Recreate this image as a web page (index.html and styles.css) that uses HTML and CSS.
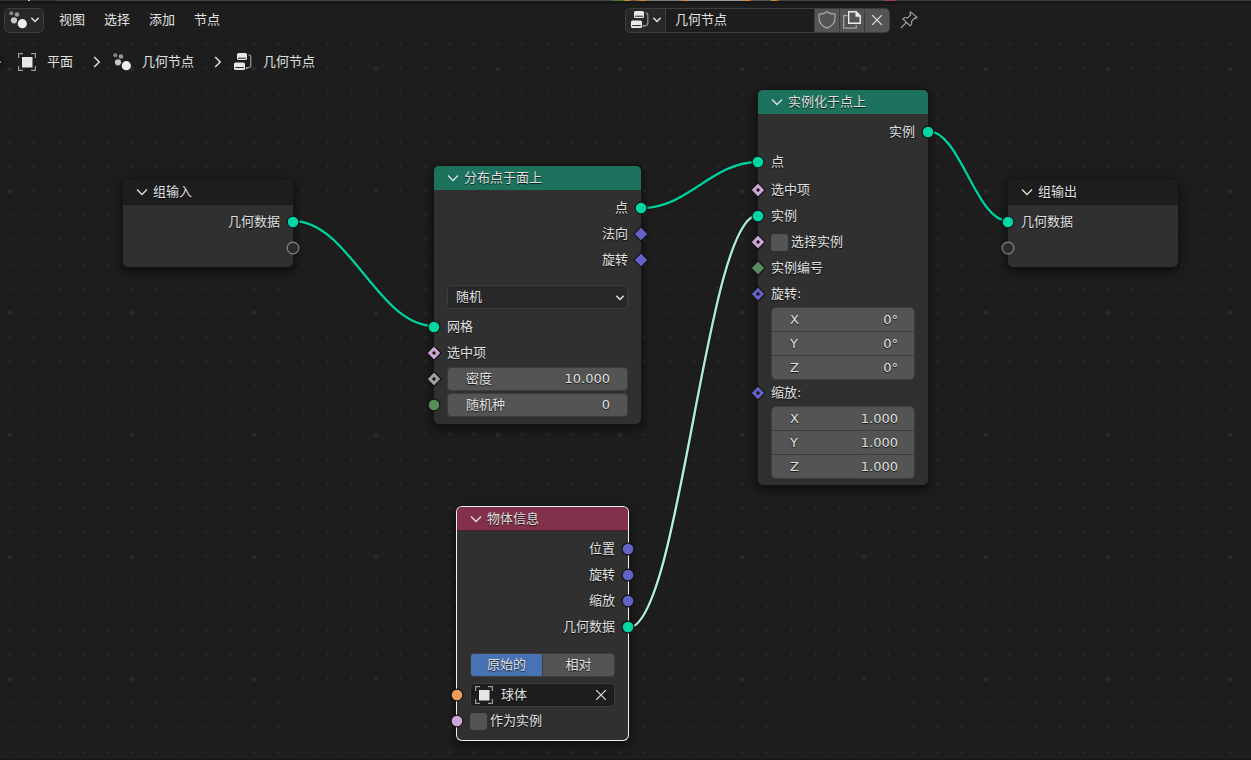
FILE: index.html
```html
<!DOCTYPE html>
<html lang="zh-CN">
<head>
<meta charset="utf-8">
<title>几何节点</title>
<link rel="stylesheet" href="styles.css">
</head>
<body>
<svg class="defs" aria-hidden="true">
  <symbol id="chev" viewBox="0 0 12 8"><path d="M1 1.5 6 6.5 11 1.5" fill="none" stroke="currentColor" stroke-width="1.3"/></symbol>
  <symbol id="chev-small" viewBox="0 0 8 6"><path d="M.4 .8 4 4.600 7.600 .8" fill="none" stroke="currentColor" stroke-width="1.4"/></symbol>
  <symbol id="chev-right" viewBox="0 0 8 12"><path d="M1.2 1 6.2 6 1.2 11" fill="none" stroke="currentColor" stroke-width="1.5"/></symbol>
  <symbol id="cross" viewBox="0 0 12 12"><path d="M1.2 1.2 10.8 10.8M10.8 1.2 1.2 10.8" fill="none" stroke="currentColor" stroke-width="1.2"/></symbol>
  <symbol id="object" viewBox="0 0 18 18"><rect x="4" y="4" width="10.500" height="10.500" fill="#e6e6e6"/><path d="M.6 5V.6H5M13 .6h4.400V5M17.400 13v4.400H13M5 17.400H.6V13" fill="none" stroke="#9a9a9a" stroke-width="1.200"/></symbol>
  <symbol id="geo" viewBox="0 0 18 18"><circle cx="2.300" cy="2.300" r="2" fill="#858585"/><circle cx="8" cy="3.500" r="2.300" fill="#979797"/><circle cx="5" cy="9.300" r="3.100" fill="#c8c8c8"/><circle cx="13.300" cy="12.700" r="4.600" fill="#eee"/></symbol>
  <symbol id="tree" viewBox="0 0 18 18"><rect x="3" y="0" width="10" height="7" rx="1.500" fill="#e8e8e8"/><path d="M4 5.200h8" stroke="#222" stroke-width="1"/><rect x="0" y="9.500" width="11" height="7.500" rx="1.500" fill="#e8e8e8"/><path d="M1.200 14.600h8.600" stroke="#222" stroke-width="1"/><path d="M14.500 1.800c1.500 0 2.300.8 2.300 2.200v8c0 1.600-1 2.600-2.600 2.600h-1" fill="none" stroke="#8d8d8d" stroke-width="1.300"/><circle cx="12.600" cy="15" r="1" fill="#aaa"/></symbol>
  <symbol id="shield" viewBox="0 0 18 18"><path d="M9 .8c2.300 1.700 4.900 2.400 8 2.400v4.300c0 4.500-3.200 7.600-8 9.600-4.800-2-8-5.100-8-9.600V3.200c3.100 0 5.700-.7 8-2.400z" fill="none" stroke="#a9a9a9" stroke-width="1.200"/></symbol>
  <symbol id="copy" viewBox="0 0 18 18"><path d="M4.500 4.700H.7v12.500h12.500V14" fill="none" stroke="#a2a2a2" stroke-width="1.300"/><path d="M5.700.8h7.500l4 4v7.500H5.700z" fill="none" stroke="#ececec" stroke-width="1.400"/><path d="M12.500.8v5h5z" fill="#ececec"/></symbol>
  <symbol id="pin" viewBox="0 0 18 18"><path d="M10.500.9 17 6.200l-1.500 1.300-1-.5-3 3.500.2 2.800-1.700 1.500L2.900 8l1.800-1.500 2.900.3 3.200-3.200-.9-1.300zM6.300 11.500.8 17.200" fill="none" stroke="#9b9b9b" stroke-width="1.200"/></symbol>
  <symbol id="circle" viewBox="0 0 14 14"><circle cx="7" cy="7" r="5.900" fill="currentColor" stroke="#151515" stroke-width="1.200"/></symbol>
  <symbol id="ring" viewBox="0 0 14 14"><circle cx="7" cy="7" r="5.800" fill="#2b2b2b" stroke="#858585" stroke-width="1.200"/></symbol>
  <symbol id="diamond" viewBox="0 0 14 14" overflow="visible"><path d="M7-.1 14.100 7 7 14.100-.1 7z" fill="currentColor" stroke="#151515" stroke-width="1.200"/></symbol>
  <symbol id="diamond-dot" viewBox="0 0 14 14" overflow="visible"><path d="M7-.1 14.100 7 7 14.100-.1 7z" fill="currentColor" stroke="#151515" stroke-width="1.200"/><circle cx="7" cy="7" r="1.700" fill="#151515"/></symbol>
</svg>

<div class="editor">
  <div class="edge"></div>
  <header class="toolbar">
    <button class="editor-type" aria-label="编辑器类型"><svg class="i18"><use href="#geo"/></svg><svg class="i8"><use href="#chev-small"/></svg></button>
    <nav class="menus">
      <button class="menu">视图</button>
      <button class="menu">选择</button>
      <button class="menu">添加</button>
      <button class="menu">节点</button>
    </nav>
    <div class="datablock">
      <button class="browse" aria-label="浏览节点树"><svg class="i18"><use href="#tree"/></svg><svg class="i8"><use href="#chev-small"/></svg></button>
      <input class="tree-name" aria-label="名称" value="几何节点">
      <button class="tool" aria-label="伪用户"><svg class="i18"><use href="#shield"/></svg></button>
      <button class="tool" aria-label="新建"><svg class="i18"><use href="#copy"/></svg></button>
      <button class="tool" aria-label="断开"><svg class="i12"><use href="#cross"/></svg></button>
    </div>
    <button class="pin" aria-label="固定"><svg class="i18"><use href="#pin"/></svg></button>
    <div class="rest"></div>
  </header>

  <main class="canvas">
    <svg class="backdrop" aria-hidden="true">
      <defs>
        <pattern id="grid" x="8" y="29" width="122" height="122" patternUnits="userSpaceOnUse">
          <g fill="#252525">
            <path d="M25 0h3v3h-3zM50 0h3v3h-3zM74 0h3v3h-3zM98 0h3v3h-3z"/>
            <path d="M1 25h3v3h-3zM25 25h3v3h-3zM50 25h3v3h-3zM74 25h3v3h-3zM98 25h3v3h-3z"/>
            <path d="M1 49h3v3h-3zM25 49h3v3h-3zM50 49h3v3h-3zM74 49h3v3h-3zM98 49h3v3h-3z"/>
            <path d="M1 74h3v3h-3zM25 74h3v3h-3zM50 74h3v3h-3zM74 74h3v3h-3zM98 74h3v3h-3z"/>
            <path d="M1 98h3v3h-3zM25 98h3v3h-3zM50 98h3v3h-3zM74 98h3v3h-3zM98 98h3v3h-3z"/>
          </g>
          <path d="M0 0h4v4h-4z" fill="#2a2a2a"/>
        </pattern>
        <linearGradient id="fade" gradientUnits="userSpaceOnUse" x1="628" y1="590" x2="758" y2="177">
          <stop offset="0" stop-color="#b4f1dc"/><stop offset="1" stop-color="#a6ebd3"/>
        </linearGradient>
      </defs>
      <rect width="100%" height="100%" fill="url(#grid)"/>
      <g fill="none" stroke="#141414" stroke-width="4">
        <path d="M293 183C349 183 378 288 434 288"/>
        <path d="M642 170C688 170 712 124 758 124"/>
        <path d="M628 590C680 590 706 177 758 177"/>
        <path d="M928 93C960 93 976 183 1008 183"/>
      </g>
      <g fill="none" stroke="#00cf9d" stroke-width="2.400">
        <path d="M293 183C349 183 378 288 434 288"/>
        <path d="M642 170C688 170 712 124 758 124"/>
        <path d="M628 590C680 590 706 177 758 177" stroke="url(#fade)"/>
        <path d="M928 93C960 93 976 183 1008 183"/>
      </g>
    </svg>

    <nav class="crumbs">
      <span class="crumb"><svg class="i18"><use href="#object"/></svg>平面</span>
      <svg class="sep"><use href="#chev-right"/></svg>
      <span class="crumb"><svg class="i18"><use href="#geo"/></svg>几何节点</span>
      <svg class="sep"><use href="#chev-right"/></svg>
      <span class="crumb"><svg class="i18"><use href="#tree"/></svg>几何节点</span>
    </nav>
    <div class="region-tab"></div>

    <section class="node group-in">
      <h2 class="title dark"><svg class="fold"><use href="#chev"/></svg>组输入</h2>
      <div class="body tight">
        <div class="row out">几何数据<svg class="socket geometry"><use href="#circle"/></svg></div>
        <div class="row out"><svg class="socket"><use href="#ring"/></svg></div>
      </div>
    </section>

    <section class="node distribute">
      <h2 class="title green"><svg class="fold"><use href="#chev"/></svg>分布点于面上</h2>
      <div class="body">
        <div class="row out">点<svg class="socket geometry"><use href="#circle"/></svg></div>
        <div class="row out">法向<svg class="socket vector"><use href="#diamond"/></svg></div>
        <div class="row out">旋转<svg class="socket vector"><use href="#diamond"/></svg></div>
        <div class="picker">
          <select class="select" aria-label="分布方式"><option>随机</option></select>
          <svg class="caret"><use href="#chev-small"/></svg>
        </div>
        <div class="row">网格<svg class="socket geometry"><use href="#circle"/></svg></div>
        <div class="row">选中项<svg class="socket bool"><use href="#diamond-dot"/></svg></div>
        <div class="row"><label class="field">密度<input class="value" value="10.000"></label><svg class="socket float"><use href="#diamond-dot"/></svg></div>
        <div class="row"><label class="field">随机种<input class="value" value="0"></label><svg class="socket int"><use href="#circle"/></svg></div>
      </div>
    </section>

    <section class="node instance">
      <h2 class="title green"><svg class="fold"><use href="#chev"/></svg>实例化于点上</h2>
      <div class="body">
        <div class="row out">实例<svg class="socket geometry"><use href="#circle"/></svg></div>
        <div class="row first-in">点<svg class="socket geometry"><use href="#circle"/></svg></div>
        <div class="row">选中项<svg class="socket bool"><use href="#diamond-dot"/></svg></div>
        <div class="row">实例<svg class="socket geometry"><use href="#circle"/></svg></div>
        <div class="row"><label class="check"><input type="checkbox" class="box">选择实例</label><svg class="socket bool"><use href="#diamond-dot"/></svg></div>
        <div class="row">实例编号<svg class="socket int"><use href="#diamond"/></svg></div>
        <div class="row">旋转:<svg class="socket vector"><use href="#diamond-dot"/></svg></div>
        <div class="triple">
          <label class="part">X<input class="value" value="0°"></label>
          <label class="part">Y<input class="value" value="0°"></label>
          <label class="part">Z<input class="value" value="0°"></label>
        </div>
        <div class="row">缩放:<svg class="socket vector"><use href="#diamond-dot"/></svg></div>
        <div class="triple">
          <label class="part">X<input class="value" value="1.000"></label>
          <label class="part">Y<input class="value" value="1.000"></label>
          <label class="part">Z<input class="value" value="1.000"></label>
        </div>
      </div>
    </section>

    <section class="node object-info">
      <h2 class="title red"><svg class="fold"><use href="#chev"/></svg>物体信息</h2>
      <div class="body">
        <div class="row out">位置<svg class="socket vector"><use href="#circle"/></svg></div>
        <div class="row out">旋转<svg class="socket vector"><use href="#circle"/></svg></div>
        <div class="row out">缩放<svg class="socket vector"><use href="#circle"/></svg></div>
        <div class="row out">几何数据<svg class="socket geometry"><use href="#circle"/></svg></div>
        <div class="toggle">
          <button class="choice on">原始的</button>
          <button class="choice">相对</button>
        </div>
        <div class="row">
          <div class="object-field"><svg class="i18"><use href="#object"/></svg><input class="object-name" aria-label="物体" value="球体"><button class="clear" aria-label="清除"><svg class="i12"><use href="#cross"/></svg></button></div>
          <svg class="socket object"><use href="#circle"/></svg>
        </div>
        <div class="row"><label class="check"><input type="checkbox" class="box">作为实例</label><svg class="socket bool"><use href="#circle"/></svg></div>
      </div>
    </section>

    <section class="node group-out">
      <h2 class="title dark"><svg class="fold"><use href="#chev"/></svg>组输出</h2>
      <div class="body tight">
        <div class="row">几何数据<svg class="socket geometry"><use href="#circle"/></svg></div>
        <div class="row"><svg class="socket"><use href="#ring"/></svg></div>
      </div>
    </section>
  </main>
</div>
</body>
</html>
```
FILE: styles.css
```css
* { box-sizing: border-box; }
body {
  margin: 0;
  background: #1d1d1d;
  color: #e0e0e0;
  font: 13px/20px "DejaVu Sans", "Noto Sans CJK SC", sans-serif;
}
button, input, select {
  margin: 0;
  padding: 0;
  border: 0;
  background: none;
  color: inherit;
  font: inherit;
}
input { min-width: 0; }
svg { display: block; flex: none; }
.defs { position: absolute; width: 0; height: 0; }
.i18 { width: 18px; height: 18px; }
.i12 { width: 12px; height: 12px; }
.i8 { width: 8px; height: 6px; }

.editor {
  display: flex;
  flex-direction: column;
  min-height: 100vh;
  border-bottom: 1px solid #1b1317;
}
.edge {
  height: 4px;
  border-bottom: 3px solid #171717;
  background: linear-gradient(90deg, #333 0 28px, #ccc 28px 30px, #333 30px 56px, #444 56px 610px, #4c7a2c 616px 622px, #e08a30 627px 629px, #555 632px, #e08a30 642px 644px, #777 648px 680px, #e08a30 682px 684px, #999 690px 740px, #e08a30 746px 749px, #555 752px 770px, #e08a30 772px 775px, #444 780px 884px, #a04050 886px 894px, #3a3a3a 898px);
}
.toolbar {
  display: flex;
  align-items: center;
  height: 34px;
  padding: 0 0 2px 4px;
}
.editor-type, .browse {
  display: flex;
  align-items: center;
  justify-content: center;
  gap: 4px;
  width: 40px;
  height: 25px;
  background: #282828;
}
.editor-type { border: 1px solid #3d3d3d; border-radius: 5px; }
.menus { display: flex; flex: 17 1 0; gap: 19px; margin-left: 15px; }
.menu { white-space: nowrap; }
.datablock {
  display: flex;
  gap: 1px;
  width: 265px;
  height: 25px;
  border: 1px solid #3d3d3d;
  border-radius: 5px;
  background: #3d3d3d;
  overflow: hidden;
}
.browse { width: 39px; height: auto; }
.tree-name { flex: 1; padding-left: 9px; background: #1d1d1d; }
.tool { display: flex; align-items: center; justify-content: center; width: 24px; background: #545454; }
.pin { margin-left: 10px; }
.rest { flex: 10 1 0; }

.canvas { position: relative; flex: 1; overflow: hidden; }
.backdrop { position: absolute; inset: 0; width: 100%; height: 100%; }
.crumbs { position: relative; display: flex; align-items: center; gap: 20px; padding: 14px 18px; }
.crumb { display: flex; align-items: center; gap: 11px; }
.sep { width: 8px; height: 12px; margin-right: -8px; }
.region-tab {
  position: absolute;
  left: 0;
  top: 16px;
  width: 4px;
  height: 16px;
  border-radius: 0 4px 4px 0;
  background: linear-gradient(#888, #888) 0 7px / 1px 2px no-repeat #181818;
}

.node {
  position: absolute;
  border-radius: 5px;
  background: #303030;
  box-shadow: 0 0 0 1px #151515, 0 3px 9px 2px rgba(0, 0, 0, .5);
  text-shadow: 0 1px 1px rgba(0, 0, 0, .8);
}
.group-in { left: 123px; top: 141px; width: 170px; }
.distribute { left: 434px; top: 128px; width: 207px; }
.instance { left: 758px; top: 52px; width: 170px; }
.object-info { left: 457px; top: 469px; width: 171px; box-shadow: 0 0 0 1px #f0f0f0, 0 3px 9px 2px rgba(0, 0, 0, .5); }
.group-out { left: 1008px; top: 141px; width: 170px; }
.title {
  display: flex;
  align-items: center;
  gap: 5px;
  height: 24px;
  margin: 0;
  padding-left: 13px;
  border-radius: 5px 5px 0 0;
  font-size: 13px;
  font-weight: 400;
}
.fold { width: 12px; height: 8px; }
.dark { height: 26px; background: #1d1d1d; border-bottom: 1px solid #181818; }
.green { background: #1d725e; }
.red { background: #83314a; border-bottom: 1px solid #4a2030; }
.body { padding: 5px 13px 6px; }
.tight { padding-top: 4px; }
.row { position: relative; display: flex; align-items: center; height: 26px; }
.out { justify-content: flex-end; }
.first-in { margin: 4px 0 2px; }
.socket { position: absolute; left: -20px; top: 6px; width: 14px; height: 14px; overflow: visible; }
.out .socket { left: auto; right: -20px; }
.geometry { color: #00d6a3; }
.vector { color: #6363c7; }
.bool { color: #cca6d6; }
.float { color: #a1a1a1; }
.int { color: #598c5c; }
.object { color: #ed9e5c; }

.picker { position: relative; margin: 12px 0 5px; }
.select {
  display: block;
  width: 100%;
  height: 24px;
  padding-left: 8px;
  border: 1px solid #3d3d3d;
  border-radius: 4px;
  background: #282828;
  appearance: none;
  text-shadow: inherit;
}
.caret { position: absolute; right: 4px; top: 10px; width: 8px; height: 6px; }
.field {
  display: flex;
  align-items: center;
  flex: 1;
  height: 24px;
  padding: 0 17px 0 18px;
  border: 1px solid #3d3d3d;
  border-radius: 4px;
  background: #545454;
  white-space: nowrap;
}
.value { flex: 1; width: 0; text-align: right; text-shadow: inherit; }
.triple {
  display: grid;
  gap: 1px;
  border: 1px solid #3d3d3d;
  border-radius: 5px;
  background: #3d3d3d;
  overflow: hidden;
}
.part { display: flex; align-items: center; height: 23px; padding: 0 16px 0 18px; background: #545454; }
.check { display: flex; align-items: center; gap: 3px; }
.box { width: 17px; height: 17px; border-radius: 3px; background: #545454; appearance: none; }
.box:checked { background: #4772b3; }

.toggle {
  display: flex;
  gap: 1px;
  height: 24px;
  margin: 13px 0 5px;
  border: 1px solid #3d3d3d;
  border-radius: 4px;
  background: #3d3d3d;
  overflow: hidden;
}
.choice { flex: 1; background: #545454; text-shadow: inherit; }
.on { background: #4772b3; }
.object-field {
  display: flex;
  align-items: center;
  flex: 1;
  height: 24px;
  padding: 0 7px 0 4px;
  border: 1px solid #3d3d3d;
  border-radius: 4px;
  background: #1d1d1d;
}
.object-name { flex: 1; width: 0; padding-left: 8px; text-shadow: inherit; }
```
